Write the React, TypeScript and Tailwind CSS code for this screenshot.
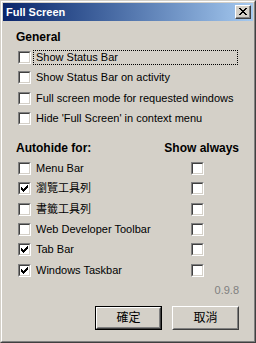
import React from "react";

const FONT = { fontFamily: '"Liberation Sans", "Noto Sans CJK TC", sans-serif' };

// classic sunken 13px checkbox
const Check = ({ checked }: { checked?: boolean }) => (
  <span className="block w-[13px] h-[13px] shrink-0 border border-t-[#808080] border-l-[#808080] border-r-white border-b-white">
    <span className="flex items-center justify-center w-full h-full bg-white border border-t-[#404040] border-l-[#404040] border-r-[#d4d0c8] border-b-[#d4d0c8]">
      {checked && (
        <svg width="7" height="7" viewBox="0 0 7 7" shapeRendering="crispEdges">
          <path d="M0 2h1v3h-1zM1 3h1v3h-1zM2 4h1v3h-1zM3 3h1v3h-1zM4 2h1v3h-1zM5 1h1v3h-1zM6 0h1v3h-1z" fill="#000" />
        </svg>
      )}
    </span>
  </span>
);

const Row = ({ label, checked, focus }: { label: string; checked?: boolean; focus?: boolean }) => (
  <div className="flex items-center h-[20px]">
    <Check checked={checked} />
    <span
      className={`ml-[3px] px-[2px] leading-[13px] ${
        focus ? "outline outline-1 outline-dotted outline-black w-[203px]" : ""
      }`}
    >
      {label}
    </span>
  </div>
);

const Button = ({ label, primary }: { label: string; primary?: boolean }) => (
  <div className={`w-[67px] h-[24px] ${primary ? "border border-black" : ""}`}>
    <div className="w-full h-full border border-t-white border-l-white border-r-[#404040] border-b-[#404040]">
      <div className="w-full h-full flex items-center justify-center border border-t-[#d4d0c8] border-l-[#d4d0c8] border-r-[#808080] border-b-[#808080] text-[12px]">
        {label}
      </div>
    </div>
  </div>
);

const autohide = [
  { label: "Menu Bar", checked: false, gap: "" },
  { label: "瀏覽工具列", checked: true, gap: "" },
  { label: "書籤工具列", checked: false, gap: "mt-[1px]" },
  { label: "Web Developer Toolbar", checked: false, gap: "" },
  { label: "Tab Bar", checked: true, gap: "" },
  { label: "Windows Taskbar", checked: true, gap: "mt-[1px]" },
];

export default function App() {
  return (
    <div style={FONT} className="w-[256px] h-[343px] text-[11px] text-black select-none">
      <div className="w-full h-full border border-t-[#d4d0c8] border-l-[#d4d0c8] border-r-[#404040] border-b-[#404040]">
        <div className="w-full h-full flex flex-col bg-[#d4d0c8] border border-t-white border-l-white border-r-[#808080] border-b-[#808080] p-[1px]">
          {/* Title bar */}
          <div className="h-[18px] flex items-center justify-between pl-[3px] pr-[2px] bg-gradient-to-r from-[#0a246a] to-[#a6caf0]">
            <span className="text-white font-bold text-[11px]">Full Screen</span>
            <div className="w-[16px] h-[14px] border border-t-white border-l-white border-r-[#404040] border-b-[#404040] bg-[#d4d0c8]">
              <div className="w-full h-full flex items-center justify-center border-r border-b border-[#808080]">
                <svg width="8" height="7" viewBox="0 0 8 7" shapeRendering="crispEdges">
                  <path d="M0 0h2v1h-2zM6 0h2v1h-2zM1 1h2v1h-2zM5 1h2v1h-2zM2 2h4v1h-4zM3 3h2v1h-2zM2 4h4v1h-4zM1 5h2v1h-2zM5 5h2v1h-2zM0 6h2v1h-2zM6 6h2v1h-2z" fill="#000" />
                </svg>
              </div>
            </div>
          </div>

          {/* Body */}
          <div className="flex flex-col pl-[13px] pr-[14px] pt-[9px]">
            <div className="font-bold text-[12px] leading-[14px]">General</div>
            <div className="flex flex-col pl-[2px] mt-[3px]">
              <Row label="Show Status Bar" focus />
              <Row label="Show Status Bar on activity" />
              <div className="mt-[1px]">
                <Row label="Full screen mode for requested windows" />
              </div>
              <Row label="Hide 'Full Screen' in context menu" />
            </div>

            <div className="flex justify-between mt-[13px] font-bold text-[12px] leading-[14px]">
              <span>Autohide for:</span>
              <span>Show always</span>
            </div>
            <div className="flex flex-col pl-[2px] mt-[3px]">
              {autohide.map((item) => (
                <div key={item.label} className={`flex items-center justify-between ${item.gap}`}>
                  <Row label={item.label} checked={item.checked} />
                  <div className="mr-[35px]">
                    <Check />
                  </div>
                </div>
              ))}
            </div>

            <div className="flex justify-end mt-[4px] text-[#808080] leading-[13px]">0.9.8</div>

            <div className="flex justify-end gap-[10px] mt-[9px]">
              <Button label="確定" primary />
              <Button label="取消" />
            </div>
          </div>
        </div>
      </div>
    </div>
  );
}
